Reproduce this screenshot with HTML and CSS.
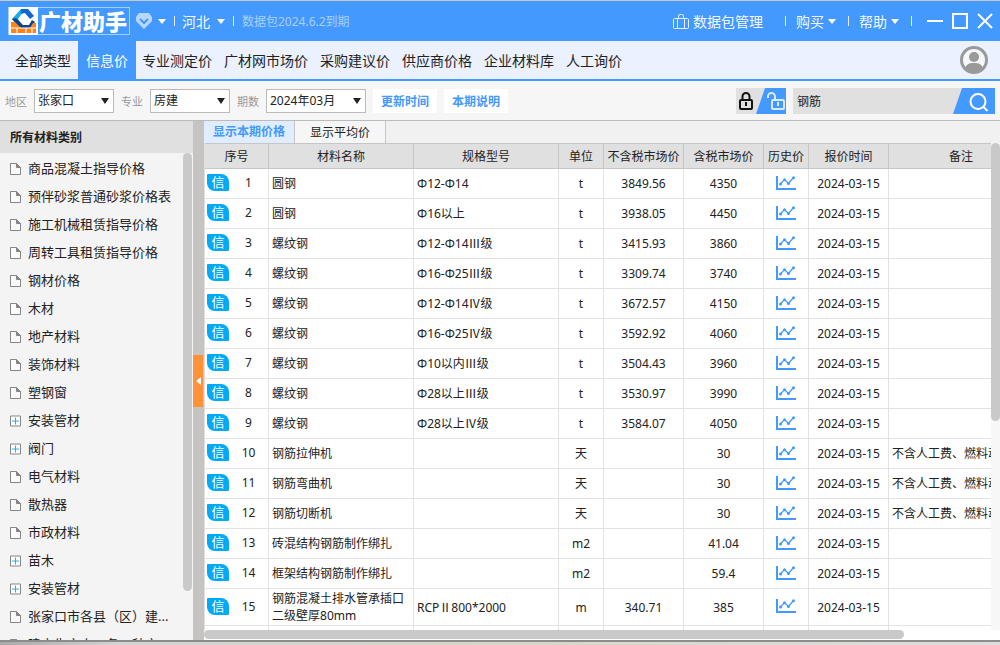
FILE: index.html
```
<!DOCTYPE html>
<html lang="zh-CN">
<head>
<meta charset="utf-8">
<title>广材助手</title>
<link rel="stylesheet" href="styles.css">
</head>
<body>
<svg class="defs" aria-hidden="true">
  <symbol id="trend" viewBox="0 0 20 14"><path d="M1 0v13h19" fill="none" stroke="#49f" stroke-width="2"/><path d="M4.500 8l4-4.500 4 4 5-6" fill="none" stroke="#49f" stroke-width="1.200"/><g fill="#49f"><circle cx="4.500" cy="8" r="1.500"/><circle cx="8.500" cy="3.800" r="1.500"/><circle cx="12.500" cy="7.500" r="1.500"/><circle cx="17.500" cy="1.800" r="1.500"/></g></symbol>
  <symbol id="doc" viewBox="0 0 11 12"><path d="M.5.5h6l4 4v7H.5z" fill="#fbfbfb" stroke="#858585"/><path d="M6.500.5v4h4z" fill="#858585" stroke="#858585"/></symbol>
  <symbol id="plus" viewBox="0 0 11 11"><path d="M.5.5h10v10H.5z" fill="#fff" stroke="#858585"/><path d="M5.500 2v7M2 5.500h7" stroke="#2bb0e6"/></symbol>
</svg>
<div class="app">
  <header class="titlebar">
    <div class="brand">
      <svg class="brand-mark" viewBox="0 0 29 28"><path fill="#fff" d="M0 0h29v28H0z"/><path fill="#17a9ee" d="M12 2h4l-7 10 4 6-3 2-7-8z"/><path fill="#1366d2" d="M12 2h7l6 7-4 3-5-6-4 1z"/><path fill="#0e418e" d="M3 12l4-1 7 7h6l3-5 3 2-4 6H11z"/><path fill="#ff8319" d="M2 15h4l6 6h9l3-5h3v10H2z"/><path d="M2 21h25M8 21v5M17 21v5M23 21v5" stroke="#fff" fill="none"/></svg>
      <span class="brand-name">广材助手</span>
    </div>
    <svg class="gem" viewBox="0 0 16 16"><path fill="#b9d8ff" d="M3 0h10l3 4v4l-8 8-8-8V4z"/><path d="M4 6l4 4 4-4" fill="none" stroke="#49f" stroke-width="2"/></svg>
    <i class="caret"></i><i class="sep"></i>
    <button class="title-btn region">河北<i class="caret"></i></button><i class="sep"></i>
    <span class="expiry">数据包2024.6.2到期</span>
    <div class="title-tools">
      <button class="title-btn manage"><svg class="case" viewBox="0 0 16 15"><path d="M1.500 4.500h13a1 1 0 0 1 1 1v8a1 1 0 0 1-1 1h-13a1 1 0 0 1-1-1v-8a1 1 0 0 1 1-1zM4.500 14V4.500M11.500 14V4.500M5.500 4V2a1.500 1.500 0 0 1 1.500-1.500h2A1.500 1.500 0 0 1 10.500 2v2" fill="none" stroke="#e4f0ff"/></svg>数据包管理</button>
      <i class="sep"></i>
      <button class="title-btn">购买<i class="caret"></i></button><i class="sep"></i>
      <button class="title-btn">帮助<i class="caret"></i></button><i class="sep"></i>
    </div>
    <div class="window-btns">
      <button aria-label="最小化"><svg viewBox="0 0 16 16"><path d="M0 8h16" stroke="#fff" stroke-width="2"/></svg></button>
      <button aria-label="最大化"><svg viewBox="0 0 16 16"><path d="M1 1h14v14H1z" fill="none" stroke="#fff" stroke-width="2"/></svg></button>
      <button aria-label="关闭"><svg viewBox="0 0 16 16"><path d="M1 1l14 14M15 1L1 15" stroke="#fff" stroke-width="2"/></svg></button>
    </div>
  </header>
  <nav class="menu">
    <a href="#" class="all">全部类型</a><a href="#" class="active">信息价</a><a href="#">专业测定价</a><a href="#">广材网市场价</a><a href="#">采购建议价</a><a href="#">供应商价格</a><a href="#">企业材料库</a><a href="#">人工询价</a>
    <button class="avatar" aria-label="用户"><svg viewBox="0 0 28 28"><circle cx="14" cy="14" r="12.500" fill="#f5f7fd" stroke="#999" stroke-width="3"/><circle cx="14" cy="11" r="5" fill="#999"/><path d="M5 23c1-5 4-6 9-6s8 1 9 6c-5 5-13 5-18 0z" fill="#999"/></svg></button>
  </nav>
  <div class="toolbar">
    <label for="area">地区</label><span class="combo"><select id="area"><option>张家口</option></select></span>
    <label for="major">专业</label><span class="combo"><select id="major"><option>房建</option></select></span>
    <label for="period">期数</label><span class="combo wide"><select id="period"><option>2024年03月</option></select></span>
    <button class="chip">更新时间</button><button class="chip">本期说明</button>
    <button class="locks" aria-label="锁定"><svg viewBox="0 0 50 26"><path fill="#e0e0e0" d="M0 0h50v26H0z"/><path fill="#49f" d="M29 0h21v26H20z"/><rect x="4" y="12" width="12" height="9" rx="1" fill="none" stroke="#111" stroke-width="2"/><path d="M6.500 12V8.500a3.500 3.500 0 0 1 7 0V12" fill="none" stroke="#111" stroke-width="2"/><path d="M10 14v4" stroke="#111" stroke-width="2"/><rect x="36" y="12" width="12" height="9" rx="1" fill="none" stroke="#d9e9ff" stroke-width="2"/><path d="M32 10V8.500a3.500 3.500 0 0 1 7 0V12" fill="none" stroke="#d9e9ff" stroke-width="2"/><path d="M42 14v4" stroke="#d9e9ff" stroke-width="2"/></svg></button>
    <div class="search"><input aria-label="搜索" value="钢筋"><button aria-label="搜索"><svg viewBox="0 0 42 26"><path d="M9 0h33v26H0z" fill="#49f"/><circle cx="25" cy="13.500" r="7.500" fill="none" stroke="#fff" stroke-width="2"/><path d="M30.500 19l4 4" stroke="#fff" stroke-width="2"/></svg></button></div>
  </div>
  <main class="work">
    <aside class="side">
      <h2>所有材料类别</h2>
      <div class="side-body">
        <ul>
          <li><svg><use href="#doc"/></svg>商品混凝土指导价格</li>
          <li><svg><use href="#doc"/></svg>预伴砂浆普通砂浆价格表</li>
          <li><svg><use href="#doc"/></svg>施工机械租赁指导价格</li>
          <li><svg><use href="#doc"/></svg>周转工具租赁指导价格</li>
          <li><svg><use href="#doc"/></svg>钢材价格</li>
          <li><svg><use href="#doc"/></svg>木材</li>
          <li><svg><use href="#doc"/></svg>地产材料</li>
          <li><svg><use href="#doc"/></svg>装饰材料</li>
          <li><svg><use href="#doc"/></svg>塑钢窗</li>
          <li><svg><use href="#plus"/></svg>安装管材</li>
          <li><svg><use href="#plus"/></svg>阀门</li>
          <li><svg><use href="#doc"/></svg>电气材料</li>
          <li><svg><use href="#doc"/></svg>散热器</li>
          <li><svg><use href="#doc"/></svg>市政材料</li>
          <li><svg><use href="#plus"/></svg>苗木</li>
          <li><svg><use href="#plus"/></svg>安装管材</li>
          <li><svg><use href="#doc"/></svg>张家口市各县（区）建...</li>
          <li><svg><use href="#doc"/></svg>建立生产人工各工种产</li>
        </ul>
        <div class="side-scroll"><i></i></div>
      </div>
    </aside>
    <div class="splitter"><button aria-label="收起"></button></div>
    <section class="content">
      <div class="tabs"><button class="on">显示本期价格</button><button>显示平均价</button></div>
      <div class="grid-wrap">
        <div class="grid">
          <table>
            <colgroup><col class="c-tag"><col class="c-no"><col class="c-name"><col class="c-spec"><col class="c-unit"><col class="c-price"><col class="c-price"><col class="c-hist"><col class="c-date"><col class="c-note"></colgroup>
            <thead><tr><th colspan="2">序号</th><th>材料名称</th><th>规格型号</th><th>单位</th><th>不含税市场价</th><th>含税市场价</th><th>历史价</th><th>报价时间</th><th>备注</th></tr></thead>
            <tbody>
              <tr><td><b>信</b></td><td>1</td><td>圆钢</td><td>Φ12-Φ14</td><td>t</td><td>3849.56</td><td>4350</td><td><svg><use href="#trend"/></svg></td><td>2024-03-15</td><td></td></tr>
              <tr><td><b>信</b></td><td>2</td><td>圆钢</td><td>Φ16以上</td><td>t</td><td>3938.05</td><td>4450</td><td><svg><use href="#trend"/></svg></td><td>2024-03-15</td><td></td></tr>
              <tr><td><b>信</b></td><td>3</td><td>螺纹钢</td><td>Φ12-Φ14Ⅲ级</td><td>t</td><td>3415.93</td><td>3860</td><td><svg><use href="#trend"/></svg></td><td>2024-03-15</td><td></td></tr>
              <tr><td><b>信</b></td><td>4</td><td>螺纹钢</td><td>Φ16-Φ25Ⅲ级</td><td>t</td><td>3309.74</td><td>3740</td><td><svg><use href="#trend"/></svg></td><td>2024-03-15</td><td></td></tr>
              <tr><td><b>信</b></td><td>5</td><td>螺纹钢</td><td>Φ12-Φ14Ⅳ级</td><td>t</td><td>3672.57</td><td>4150</td><td><svg><use href="#trend"/></svg></td><td>2024-03-15</td><td></td></tr>
              <tr><td><b>信</b></td><td>6</td><td>螺纹钢</td><td>Φ16-Φ25Ⅳ级</td><td>t</td><td>3592.92</td><td>4060</td><td><svg><use href="#trend"/></svg></td><td>2024-03-15</td><td></td></tr>
              <tr><td><b>信</b></td><td>7</td><td>螺纹钢</td><td>Φ10以内Ⅲ级</td><td>t</td><td>3504.43</td><td>3960</td><td><svg><use href="#trend"/></svg></td><td>2024-03-15</td><td></td></tr>
              <tr><td><b>信</b></td><td>8</td><td>螺纹钢</td><td>Φ28以上Ⅲ级</td><td>t</td><td>3530.97</td><td>3990</td><td><svg><use href="#trend"/></svg></td><td>2024-03-15</td><td></td></tr>
              <tr><td><b>信</b></td><td>9</td><td>螺纹钢</td><td>Φ28以上Ⅳ级</td><td>t</td><td>3584.07</td><td>4050</td><td><svg><use href="#trend"/></svg></td><td>2024-03-15</td><td></td></tr>
              <tr><td><b>信</b></td><td>10</td><td>钢筋拉伸机</td><td></td><td>天</td><td></td><td>30</td><td><svg><use href="#trend"/></svg></td><td>2024-03-15</td><td>不含人工费、燃料动力费</td></tr>
              <tr><td><b>信</b></td><td>11</td><td>钢筋弯曲机</td><td></td><td>天</td><td></td><td>30</td><td><svg><use href="#trend"/></svg></td><td>2024-03-15</td><td>不含人工费、燃料动力费</td></tr>
              <tr><td><b>信</b></td><td>12</td><td>钢筋切断机</td><td></td><td>天</td><td></td><td>30</td><td><svg><use href="#trend"/></svg></td><td>2024-03-15</td><td>不含人工费、燃料动力费</td></tr>
              <tr><td><b>信</b></td><td>13</td><td>砖混结构钢筋制作绑扎</td><td></td><td>m2</td><td></td><td>41.04</td><td><svg><use href="#trend"/></svg></td><td>2024-03-15</td><td></td></tr>
              <tr><td><b>信</b></td><td>14</td><td>框架结构钢筋制作绑扎</td><td></td><td>m2</td><td></td><td>59.4</td><td><svg><use href="#trend"/></svg></td><td>2024-03-15</td><td></td></tr>
              <tr><td><b>信</b></td><td>15</td><td>钢筋混凝土排水管承插口二级壁厚80mm</td><td>RCPⅡ800*2000</td><td>m</td><td>340.71</td><td>385</td><td><svg><use href="#trend"/></svg></td><td>2024-03-15</td><td></td></tr>
              <tr><td></td><td></td><td></td><td></td><td></td><td></td><td></td><td></td><td></td><td></td></tr>
            </tbody>
          </table>
        </div>
        <div class="v-scroll"><i></i></div>
      </div>
      <div class="h-scroll"><i></i></div>
    </section>
  </main>
  <div class="desk"></div>
</div>
</body>
</html>
```
FILE: styles.css
```
* { box-sizing: border-box; }
body, h2, ul { margin: 0; padding: 0; }
body, button, input, select { font-family: "Noto Sans", "Noto Sans CJK SC", sans-serif; font-size: 12px; color: #222; }
button { border: 0; padding: 0; background: none; }
.defs { position: absolute; width: 0; height: 0; }
.app { display: flex; flex-direction: column; height: 100vh; overflow: hidden; border-top: 1px solid #c9c7c5; }

.titlebar { flex: none; display: flex; align-items: center; height: 40px; padding: 0 7px 0 8px; background: #49f; color: #fff; }
.brand { display: flex; align-items: center; width: 122px; height: 28px; border: 1px solid #a6cfff; }
.brand-mark { width: 29px; height: 28px; margin-right: 1px; }
.brand-name { font-size: 22px; font-weight: 900; line-height: 26px; }
.gem { width: 16px; height: 16px; margin: 0 6px; }
.caret { flex: none; border: 4px solid transparent; border-top: 5px solid #fff; border-bottom: 0; }
.sep { flex: none; width: 1px; height: 10px; background: #e4f0ff; margin: 0 7px 0 8px; }
.title-btn { display: flex; align-items: center; gap: 4px; padding: 0 2px; color: #f2f8ff; font-size: 14px; white-space: nowrap; }
.region { gap: 7px; padding: 0; }
.expiry { margin-left: 1px; color: #a9d0ff; }
.title-tools { display: flex; align-items: center; margin-left: auto; }
.title-tools .sep { margin: 0 8px 0 10px; }
.manage { margin-right: 10px; }
.case { width: 16px; height: 15px; }
.window-btns { display: flex; gap: 9px; margin-left: 7px; }
.window-btns svg { display: block; width: 16px; height: 16px; }

.menu { flex: none; display: flex; height: 40px; background: #ebf1ff; border-bottom: 2px solid #49f; }
.menu a { padding: 0 6px; line-height: 40px; font-size: 14px; color: #222; text-decoration: none; white-space: nowrap; }
.menu .all { padding: 0 7px 0 15px; }
.menu .active { padding: 0 8px; background: #49f; color: #fff; }
.avatar { margin: 0 12px 0 auto; }
.avatar svg { display: block; width: 28px; height: 28px; }

.toolbar { flex: none; display: flex; align-items: center; gap: 7px; height: 40px; padding: 0 5px; background: #f6f6f6; border-bottom: 1px solid #bbb; }
.toolbar label { font-size: 11px; color: #999; white-space: nowrap; }
.combo { position: relative; flex: none; width: 80px; }
.combo.wide { width: 100px; }
.combo select { display: block; width: 100%; height: 24px; padding: 0 3px; border: 1px solid #bbb; border-radius: 0; background: #fff; appearance: none; color: #222; }
.combo::after { content: ""; position: absolute; top: 9px; right: 5px; border: 4px solid transparent; border-top: 6px solid #222; border-bottom: 0; pointer-events: none; }
.chip { height: 24px; padding: 0 8px; background: #fff; color: #49f; font-weight: bold; white-space: nowrap; }
.locks { margin-left: auto; }
.locks svg { display: block; width: 50px; height: 26px; }
.search { display: flex; width: 202px; height: 26px; background: #e0e0e0; }
.search input { flex: 1; min-width: 0; border: 0; padding: 0 4px; background: none; }
.search svg { display: block; width: 42px; height: 26px; }

.work { flex: 1; min-height: 0; display: flex; }
.side { flex: none; width: 193px; display: flex; flex-direction: column; background: #f4f4f4; }
.side h2 { flex: none; padding-left: 10px; height: 32px; line-height: 33px; font-size: 12px; background: #e0e0e0; }
.side-body { flex: 1; min-height: 0; display: flex; }
.side ul { flex: 1; overflow: hidden; list-style: none; }
.side li { display: flex; align-items: center; gap: 7px; height: 28px; padding-left: 10px; font-size: 13px; white-space: nowrap; }
.side li svg { flex: none; width: 11px; height: 12px; margin-top: 4px; }
.side-scroll { width: 10px; padding-right: 1px; }
.side-scroll i { display: block; height: 90%; border-radius: 5px; background: #c9c9c9; }
.splitter { flex: none; display: flex; align-items: center; width: 11px; background: #c6c4c2; }
.splitter button { display: grid; place-items: center; width: 10px; height: 52px; background: #ff9138; }
.splitter button::after { content: ""; border: 4px solid transparent; border-right: 5px solid #fff; border-left: 0; }

.content { flex: 1; min-width: 0; display: flex; flex-direction: column; background: #fff; }
.tabs { flex: none; display: flex; height: 22px; background: #f1f1f1; }
.tabs button { padding: 1px 15px 0; border-right: 1px solid #c6c6c6; background: #f6f6f6; line-height: 22px; }
.tabs .on { padding: 0 9px; background: #e0edff; color: #49f; font-weight: bold; }
.grid-wrap { flex: 1; min-height: 0; display: flex; }
.grid { flex: 1; min-width: 0; overflow: hidden; }
table { table-layout: fixed; width: 829px; border-collapse: separate; border-spacing: 0; border-left: 1px solid #e0e0e0; }
.c-tag { width: 24px; }
.c-no { width: 40px; }
.c-name, .c-spec, .c-note { width: 145px; }
.c-unit, .c-hist { width: 45px; }
.c-price, .c-date { width: 80px; }
th { height: 26px; padding: 0; border: solid #c6c6c6; border-width: 1px 1px 1px 0; background: #e0e0e0; font-weight: normal; white-space: nowrap; }
td { height: 30px; padding: 0 3px; border: solid #e2e2e2; border-width: 0 1px 1px 0; line-height: 17px; text-align: center; white-space: nowrap; }
td:first-child { padding: 0 0 2px; border-right: 0; }
td:nth-child(2), td:nth-child(8) { padding-bottom: 2px; }
td:nth-child(3), td:nth-child(4), td:nth-child(10) { text-align: left; }
td:nth-child(3) { white-space: normal; }
tr:nth-child(15) td { height: 37px; }
td b { display: block; width: 22px; height: 17px; margin-left: 2px; border-radius: 1px 8px 1px 8px; background: #03a9f4; color: #fff; font-size: 13px; font-weight: normal; line-height: 17px; }
td svg { display: block; width: 20px; height: 14px; margin: 0 auto; }
.v-scroll { flex: none; width: 9px; background: #f7f7f7; }
.v-scroll i { display: block; height: 57%; border-radius: 5px; background: #c9c9c9; }
.h-scroll { flex: none; height: 10px; background: #fff; }
.h-scroll i { display: block; width: 88%; height: 9px; border-radius: 5px; background: #c9c9c9; }
.desk { flex: none; height: 5px; border-top: 2px solid #8c8c8c; background: linear-gradient(90deg, #a9a9a9, #d4d4d4 12%, #d6d7c6 50%, #ddd); }
```
